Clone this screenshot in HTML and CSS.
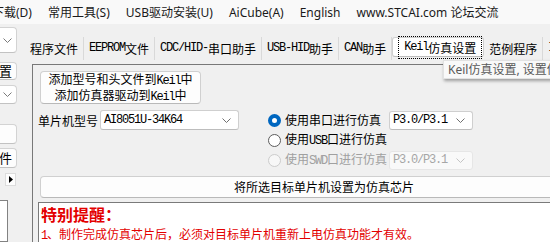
FILE: index.html
```html
<!DOCTYPE html>
<html lang="zh-CN">
<head>
<meta charset="utf-8">
<title>Keil仿真设置</title>
<link rel="stylesheet" href="styles.css">
</head>
<body>
<div class="menubar">
  <span class="mi first">下载(D)</span>
  <span class="mi">常用工具(S)</span>
  <span class="mi">USB驱动安装(U)</span>
  <span class="mi">AiCube(A)</span>
  <span class="mi">English</span>
  <span class="mi">www.STCAI.com 论坛交流</span>
</div>
<div class="workspace">
  <div class="leftcol">
    <div class="lctl lsel1"><svg class="chev" width="9" height="5" viewBox="0 0 9 5"><path d="M0.5 0.5 L4.5 4.5 L8.5 0.5" fill="none" stroke="#7a7a7a" stroke-width="1"/></svg></div>
    <div class="lctl lbtn1">置</div>
    <div class="lctl lsel2"><svg class="chev" width="9" height="5" viewBox="0 0 9 5"><path d="M0.5 0.5 L4.5 4.5 L8.5 0.5" fill="none" stroke="#7a7a7a" stroke-width="1"/></svg></div>
    <div class="lctl lbox"></div>
    <div class="lctl lbtn2">件</div>
    <div class="larrow"><svg width="4" height="7" viewBox="0 0 4 7"><path d="M0 0 L4 3.5 L0 7 Z" fill="#000"/></svg></div>
    <div class="llist"></div>
  </div>
  <div class="main">
    <div class="tabs">
      <div class="tab">程序文件</div>
      <div class="tab"><span class="m">EEPROM</span>文件</div>
      <div class="tab"><span class="m">CDC/HID-</span>串口助手</div>
      <div class="tab"><span class="m">USB-HID</span>助手</div>
      <div class="tab"><span class="m">CAN</span>助手</div>
      <div class="tab sel"><span class="focus"><span class="m">Keil</span>仿真设置</span></div>
      <div class="tab">范例程序</div>
      <div class="tab"><span class="m">I</span>SP</div>
    </div>
    <div class="page">
      <button class="btn b1"><span>添加型号和头文件到<span class="m">Keil</span>中</span><span>添加仿真器驱动到<span class="m">Keil</span>中</span></button>
      <div class="form">
        <div class="model">
          <span class="lbl">单片机型号</span>
          <div class="sel model-sel"><span class="m">AI8051U-34K64</span><svg class="chev" width="9" height="5" viewBox="0 0 9 5"><path d="M0.5 0.5 L4.5 4.5 L8.5 0.5" fill="none" stroke="#6f6f6f" stroke-width="1"/></svg></div>
        </div>
        <div class="radios">
          <div class="radio on"><span class="dot"></span><span>使用串口进行仿真</span></div>
          <div class="sel port"><span class="m">P3.0/P3.1</span><svg class="chev" width="9" height="5" viewBox="0 0 9 5"><path d="M0.5 0.5 L4.5 4.5 L8.5 0.5" fill="none" stroke="#6f6f6f" stroke-width="1"/></svg></div>
          <div class="radio"><span class="dot"></span><span>使用<span class="m">USB</span>口进行仿真</span></div>
          <div></div>
          <div class="radio dis"><span class="dot"></span><span>使用<span class="m">SWD</span>口进行仿真</span></div>
          <div class="sel port dis"><span class="m">P3.0/P3.1</span><svg class="chev" width="9" height="5" viewBox="0 0 9 5"><path d="M0.5 0.5 L4.5 4.5 L8.5 0.5" fill="none" stroke="#c4c4c4" stroke-width="1"/></svg></div>
        </div>
      </div>
      <button class="btn b2">将所选目标单片机设置为仿真芯片</button>
      <div class="note">
        <div class="note-title">特别提醒：</div>
        <div class="note-line"><span class="m">1</span>、制作完成仿真芯片后，必须对目标单片机重新上电仿真功能才有效。</div>
      </div>
    </div>
  </div>
</div>
<div class="tooltip">Keil仿真设置, 设置仿真芯片</div>
</body>
</html>
```
FILE: styles.css
```css
* { box-sizing: border-box; margin: 0; padding: 0; }
html, body { width: 550px; height: 242px; overflow: hidden; }
body {
  background: #f0f0f0;
  font-family: "Noto Sans", "Noto Sans CJK SC", sans-serif;
  font-size: 12px;
  color: #000;
  position: relative;
}
.m {
  font-family: "Liberation Mono", monospace;
  font-size: 12px;
  letter-spacing: -1.2px;
}

/* menu */
.menubar {
  height: 24px;
  background: #f9f9f9;
  display: flex;
  align-items: center;
  gap: 16px;
  white-space: nowrap;
  line-height: 16px;
  color: #1a1a1a;
  padding-top: 2px;
  overflow: hidden;
}
.mi { flex: none; }
.mi.first { margin-left: -8px; }

/* workspace */
.workspace { display: flex; padding-top: 3px; height: 218px; }
.leftcol { width: 18px; flex: none; display: flex; flex-direction: column; }
.lctl {
  margin-left: -10px;
  width: 27px;
  background: #fdfdfd;
  border: 1px solid #d3d3d3;
  border-bottom-color: #c2c2c2;
  border-radius: 4px;
  display: flex;
  align-items: center;
  justify-content: flex-end;
  padding-right: 4px;
  font-family: "Noto Sans CJK SC", sans-serif;
  font-size: 13px;
  line-height: 16px;
  flex: none;
  overflow: hidden;
}
.lsel1 { height: 26px; background: #fff; }
.lbtn1 { margin-top: 9px; height: 18px; }
.lsel2 { margin-top: 5px; height: 19px; background: #fff; }
.lbox { margin-top: 20px; height: 20px; }
.lbtn2 { margin-top: 4px; height: 20px; }
.larrow {
  margin-top: 5px;
  margin-left: 5px;
  width: 11px;
  height: 13px;
  background: #fdfdfd;
  border: 1px solid #dcdcdc;
  display: flex;
  align-items: center;
  justify-content: center;
  flex: none;
}
.llist {
  margin-top: 14px;
  margin-left: -10px;
  width: 18px;
  flex: 1;
  background: #fff;
  border: 1px solid #828282;
}

.main { margin-left: 7px; flex: 1; min-width: 0; overflow: hidden; }

/* tabs */
.tabs {
  margin-top: 9px;
  height: 28px;
  display: flex;
  align-items: flex-start;
  padding-top: 1px;
  white-space: nowrap;
  font-family: "Noto Sans CJK SC", sans-serif;
}
.tab {
  height: 23px;
  line-height: 21px;
  padding: 0 5px;
  border-right: 1px solid #d9d9d9;
  display: flex;
  align-items: center;
  flex: none;
}
.tab.sel { padding: 0 1px 0 5px; }
.focus {
  height: 23px;
  border: 1px dotted #000;
  padding: 0 5px;
  display: flex;
  align-items: center;
}

/* page */
.page {
  margin-left: 7px;
  width: 620px;
  height: 200px;
  border-top: 1px solid #787878;
  border-left: 1px solid #787878;
  padding: 6px 0 0 5px;
}
.btn {
  display: flex;
  flex-direction: column;
  align-items: center;
  justify-content: center;
  background: #fdfdfd;
  border: 1px solid #d0d0d0;
  border-bottom-color: #b9b9b9;
  border-radius: 4px;
  font-family: "Noto Sans CJK SC", sans-serif;
  font-size: 12px;
  color: #000;
}
.b1 { margin-left: 2px; width: 161px; height: 33px; line-height: 14px; }
.b2 { margin-left: 2px; margin-top: 6px; width: 568px; height: 22px; line-height: 16px; }

.form { display: flex; margin-top: 6px; height: 60px; }
.model { display: flex; align-items: center; height: 20px; gap: 2px; }
.lbl { font-family: "Noto Sans CJK SC", sans-serif; width: 60px; }
.sel {
  display: flex;
  align-items: center;
  justify-content: space-between;
  background: #fff;
  border: 1px solid #cfcfcf;
  border-bottom-color: #bdbdbd;
  border-radius: 3px;
  padding: 0 7px 0 3px;
  height: 20px;
}
.model-sel { width: 139px; }
.radios {
  margin-left: 29px;
  display: grid;
  grid-template-columns: 121px 84px;
  grid-template-rows: 20px 20px 20px;
  align-items: center;
  font-family: "Noto Sans CJK SC", sans-serif;
  white-space: nowrap;
}
.radio { display: flex; align-items: center; gap: 4px; line-height: 16px; }
.dot {
  width: 13px;
  height: 13px;
  border-radius: 50%;
  border: 1px solid #5c5c5c;
  background: #fff;
  flex: none;
}
.radio.on .dot { border: 4px solid #0067c0; background: #fff; }
.radio.dis { color: #a0a0a0; }
.radio.dis .dot { border-color: #cccccc; background: #f7f7f7; }
.port { width: 84px; height: 19px; }
.sel.dis { background: #f9f9f9; border-color: #e6e6e6; color: #a6a6a6; }

.note {
  margin-top: 4px;
  width: 600px;
  height: 60px;
  background: #fff;
  border-top: 1px solid #7a7a7a;
  border-left: 1px solid #7a7a7a;
  padding: 1px 0 0 2px;
  color: #e30000;
  font-family: "Noto Sans CJK SC", sans-serif;
}
.note-title { font-size: 16px; font-weight: bold; line-height: 20px; }
.note-line { font-size: 12px; line-height: 20px; white-space: nowrap; }

.tooltip {
  position: absolute;
  left: 443px;
  top: 60px;
  width: 130px;
  height: 19px;
  background: #f9f9f9;
  border: 1px solid #e2e2e2;
  box-shadow: 1px 2px 3px rgba(0, 0, 0, 0.35);
  color: #595959;
  padding-left: 4px;
  line-height: 17px;
  white-space: nowrap;
  overflow: hidden;
}
```
